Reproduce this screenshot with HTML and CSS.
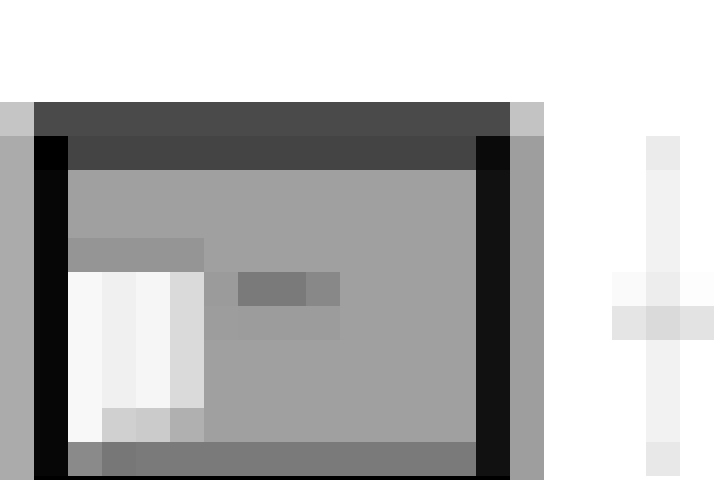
FILE: index.html
```html
<!DOCTYPE html>
<html lang="en">
<head>
<meta charset="utf-8">
<title>Window</title>
<link rel="stylesheet" href="styles.css">
</head>
<body>
<div class="screen">
  <div class="window">
    <div class="corner-l"></div>
    <div class="titlebar"></div>
    <div class="corner-r"></div>
    <div class="side-l"></div>
    <div class="frame">
      <div class="f-tl"></div>
      <div class="toolbar"></div>
      <div class="f-tr"></div>
      <div class="f-l"></div>
      <div class="body">
        <div class="sb-head"></div>
        <div class="card">
          <div class="strip s1"><div class="top"></div></div>
          <div class="strip s2"><div class="top"></div><div class="foot"></div></div>
          <div class="strip s3"><div class="top"></div><div class="foot"></div></div>
          <div class="strip s4"><div class="top"></div><div class="foot"></div></div>
        </div>
        <div class="badge">
          <div class="b b1"></div><div class="b b2"></div><div class="b b3"></div>
          <div class="b b4"></div><div class="b b5"></div><div class="b b6"></div>
        </div>
        <div class="status">
          <div class="st1"></div><div class="st2"></div><div class="st3"></div>
        </div>
      </div>
      <div class="f-r"></div>
      <div class="f-bottom"></div>
    </div>
    <div class="side-r"></div>
  </div>
  <div class="slider">
    <div class="track t-top"></div>
    <div class="track t-mid"></div>
    <div class="hover-l"></div><div class="track t-hover"></div><div class="hover-r"></div>
    <div class="thumb-l"></div><div class="track t-thumb"></div><div class="thumb-r"></div>
    <div class="track t-low"></div>
    <div class="track t-end"></div>
  </div>
</div>
</body>
</html>
```

FILE: styles.css
```css
html, body {
  margin: 0;
  padding: 0;
  background: #ffffff;
  font-family: "Liberation Sans", Arial, sans-serif;
}

.screen {
  width: 720px;
  height: 480px;
  display: grid;
  grid-template-columns: repeat(21, 34px) 6px;
  grid-template-rows: repeat(14, 34px) 4px;
  background: #ffffff;
  overflow: hidden;
}

/* ---------- window ---------- */
.window {
  grid-column: 1 / 17;
  grid-row: 4 / 16;
  display: grid;
  grid-template-columns: 34px 1fr 34px;
  grid-template-rows: 34px 1fr;
}
.corner-l { background: #c5c5c5; }
.titlebar { background: #4a4a4a; }
.corner-r { background: #c3c3c3; }
.side-l { background: #ababab; }
.side-r { background: #9e9e9e; }

.frame {
  display: grid;
  grid-template-columns: 34px 1fr 34px;
  grid-template-rows: 34px 1fr 4px;
  background: #060606;
}
.f-tl { background: #000000; }
.toolbar { background: #444444; }
.f-tr { background: #0a0a0a; }
.f-l { background: #060606; }
.f-r { background: #111111; }
.f-bottom { grid-column: 1 / 4; background: #000000; }

/* ---------- body ---------- */
.body {
  display: grid;
  grid-template-columns: repeat(12, 34px);
  grid-template-rows: repeat(9, 34px);
  background: #a0a0a0;
}
.sb-head {
  grid-column: 1 / 5;
  grid-row: 3;
  background: #959595;
}
.card {
  grid-column: 1 / 5;
  grid-row: 4 / 9;
  display: flex;
}
.strip {
  flex: 1;
  display: flex;
  flex-direction: column;
}
.strip .top { flex: 1; }
.strip .foot { height: 34px; }
.s1 .top { background: #f8f8f8; }
.s2 .top { background: #f0f0f0; }
.s2 .foot { background: #d0d0d0; }
.s3 .top { background: #f6f6f6; }
.s3 .foot { background: #cbcbcb; }
.s4 .top { background: #dadada; }
.s4 .foot { background: #b0b0b0; }

.badge {
  grid-column: 5 / 9;
  grid-row: 4 / 6;
  display: grid;
  grid-template-columns: 34px 68px 34px;
  grid-template-rows: 34px 34px;
}
.b1 { background: #9b9b9b; }
.b2 { background: #7a7a7a; }
.b3 { background: #888888; }
.b4 { background: #9d9d9d; }
.b5 { background: #9c9c9c; }
.b6 { background: #9c9c9c; }

.status {
  grid-column: 1 / 13;
  grid-row: 9;
  display: grid;
  grid-template-columns: 34px 34px 1fr;
}
.st1 { background: #8a8a8a; }
.st2 { background: #777777; }
.st3 { background: #7a7a7a; }

/* ---------- slider ---------- */
.slider {
  grid-column: 19 / 22;
  grid-row: 5 / 15;
  display: grid;
  grid-template-columns: 34px 34px 34px;
  grid-template-rows: 34px 102px 34px 34px 102px 34px;
}
.track { grid-column: 2; }
.t-top { grid-row: 1; background: #ebebeb; }
.t-mid { grid-row: 2; background: #f2f2f2; }
.hover-l { grid-row: 3; grid-column: 1; background: #fafafa; }
.t-hover { grid-row: 3; background: #ededed; }
.hover-r { grid-row: 3; grid-column: 3; background: #fdfdfd; }
.thumb-l { grid-row: 4; grid-column: 1; background: #e5e5e5; }
.t-thumb { grid-row: 4; background: #dadada; }
.thumb-r { grid-row: 4; grid-column: 3; background: #e3e3e3; }
.t-low { grid-row: 5; background: #f2f2f2; }
.t-end { grid-row: 6; background: #e8e8e8; }
```
